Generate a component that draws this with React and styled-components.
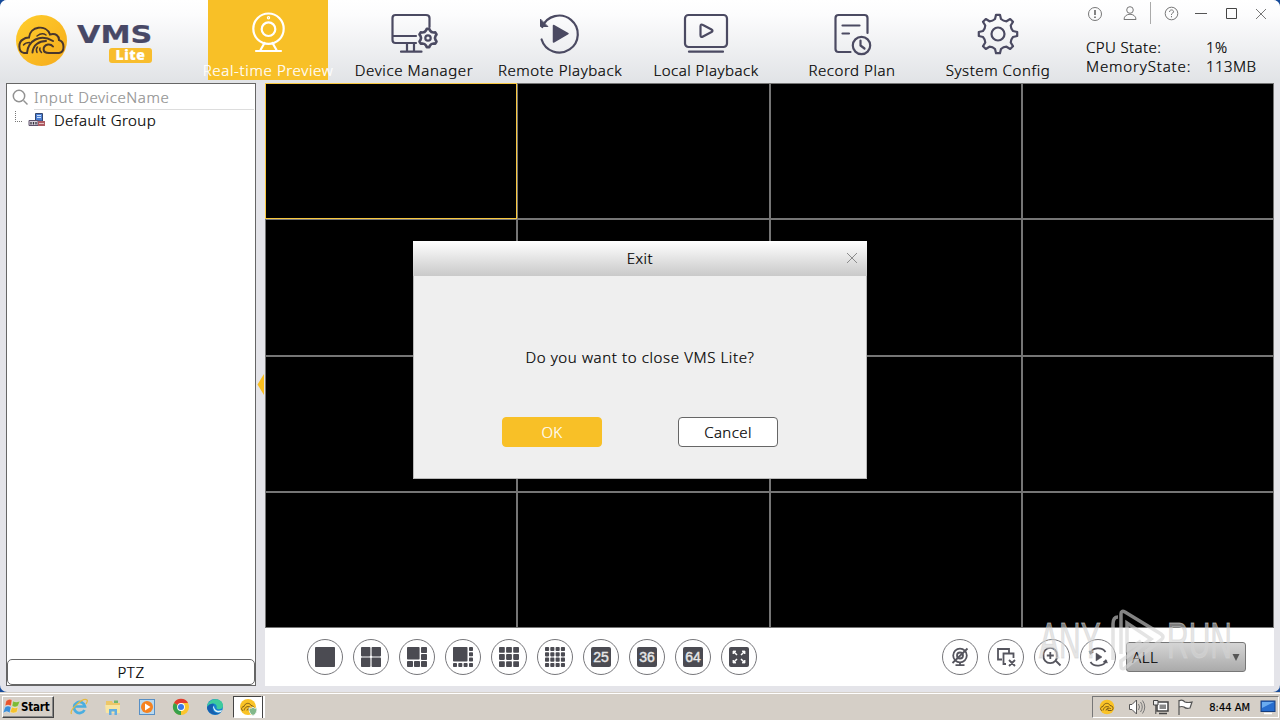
import React from "react";
import styled, { createGlobalStyle } from "styled-components";

const navItems = [
  { text: "Real-time Preview", icon: "camera", active: true, track: 0.64 },
  { text: "Device Manager", icon: "device", track: 0.62 },
  { text: "Remote Playback", icon: "remote", track: 0.56 },
  { text: "Local Playback", icon: "local", track: 0.5 },
  { text: "Record Plan", icon: "record", track: 0.56 },
  { text: "System Config", icon: "config", track: 0.56 },
];

// [x, y, size] blocks on a 20px square
const square = (n, size, gap) => {
  const list = [];
  for (let y = 0; y < n; y++)
    for (let x = 0; x < n; x++)
      list.push([x * (size + gap), y * (size + gap), size]);
  return list;
};
const layouts = [
  [[0, 0, 20]],
  square(2, 9.4, 1.2),
  [[0, 0, 12.6], [14, 0, 6], [14, 7, 6], [14, 14, 6], [0, 14, 6], [7, 14, 6]],
  [[0, 0, 14.5], [16, 0, 4], [16, 5.3, 4], [16, 10.6, 4], [16, 16, 4], [0, 16, 4], [5.3, 16, 4], [10.6, 16, 4]],
  square(3, 5.8, 1.3),
  square(4, 4.1, 1.2),
];

const gearPath = (teeth, cx, cy, inner, outer) => {
  const step = (Math.PI * 2) / teeth;
  const at = (r, a) =>
    `${(cx + r * Math.sin(a)).toFixed(2)} ${(cy - r * Math.cos(a)).toFixed(2)}`;
  let d = "";
  for (let i = 0; i < teeth; i++) {
    const a = i * step;
    d += `${i ? "L" : "M"}${at(outer, a - step * 0.13)} L${at(outer, a + step * 0.13)} `;
    d += `L${at(inner + 0.8, a + step * 0.25)} Q${at(inner - 0.6, a + step * 0.5)} ${at(inner + 0.8, a + step * 0.75)} `;
  }
  return d + "Z";
};

const NavIcon = ({ name }) => (
  <NavSvg viewBox="0 0 48 44" $active={name === "camera"}>
    {name === "camera" && (
      <>
        <circle cx="24.5" cy="18.7" r="15.2" />
        <circle cx="24.5" cy="19.2" r="6.8" />
        <circle cx="24.5" cy="7.700" r="0.6" />
        <path d="M20.500 33l-4 7M28.500 33l4 7M12 41H37" />
      </>
    )}
    {name === "device" && (
      <>
        <path d="M26 33H5.500Q2.500 33 2.500 30V8Q2.500 5 5.500 5H36Q39.500 5 39.500 8V17M3 26H26M17 33V41M24 33V41M11 41.700H31.500" />
        <path d={gearPath(6, 38, 28, 7, 9.2)} strokeWidth="2.600" />
        <circle cx="38" cy="28" r="2.7" />
      </>
    )}
    {name === "remote" && (
      <>
        <path d="M6.200 17A18.500 18.500 0 1 1 5.600 29.500" />
        <path d="M4.500 9.500V16.500H11.500Z" fill="currentColor" strokeWidth="1" />
        <path d="M17.500 15.500V32L32 23.700Z" fill="currentColor" strokeWidth="1.500" />
      </>
    )}
    {name === "local" && (
      <>
        <rect x="3" y="5" width="42" height="32" rx="3.500" />
        <path d="M7 41.700H41" />
        <path d="M18.500 16.500Q18.500 13.500 21 15L29.500 19.500Q31.500 20.700 29.500 22L21 26.500Q18.500 28 18.500 25Z" />
      </>
    )}
    {name === "record" && (
      <>
        <path d="M22.500 42H10.500Q7.500 42 7.500 39V8Q7.500 5 10.500 5H36.500Q39.500 5 39.500 8V23M14.500 15.500H31.500M14.500 23.500H21" />
        <circle cx="33.500" cy="35.500" r="8.700" />
        <path d="M32.500 30.500V35.500L36.500 38.500" />
      </>
    )}
    {name === "config" && (
      <>
        <path d={gearPath(8, 24, 24, 14.5, 19.3)} />
        <circle cx="24" cy="24" r="6.500" />
      </>
    )}
  </NavSvg>
);

const Logo = () => (
  <LogoWrap>
    <svg width="52" height="52" viewBox="0 0 52 52">
      <defs>
        <linearGradient id="sun" x1="0" y1="0" x2="1" y2="1">
          <stop offset="0" stopColor="#ffce2c" />
          <stop offset="1" stopColor="#f6ab1c" />
        </linearGradient>
      </defs>
      <circle cx="25.500" cy="26.500" r="25.500" fill="url(#sun)" />
      <g fill="none" stroke="#49362c" strokeWidth="2" strokeLinecap="round">
        <path d="M11 39H8C2 38 2 28 7 25.500Q9 23.500 13 23.500C14 12 30 10 34 20.500C40 19 43 22 43 26C49 28 49 38 43 39H33C26 39 26 32 32 30.500Q35 30 37 32.500" />
        <path d="M11 39C12 27 24 19 37 27M16.500 38.500C17 31 23 27 30 27" />
        <path d="M21 38.500Q19.500 35 21.500 33M25.500 38.500Q23 36 24 34M7.500 31Q9.500 28.500 13.500 28.500M21 22Q26 18 30 21" strokeWidth="1.500" />
      </g>
    </svg>
    <Brand>
      <BrandName>VMS</BrandName>
      <BrandTag>Lite</BrandTag>
    </Brand>
  </LogoWrap>
);

const ActionIcon = ({ name }) => (
  <svg width="24" height="24" viewBox="0 0 24 24" fill="none" stroke="#55555e" strokeWidth="1.8">
    {name === "mute" && (
      <>
        <circle cx="12" cy="10.500" r="6.800" />
        <circle cx="12" cy="10.500" r="3" />
        <path d="M12 17V20M7.500 20.200H16.500M4.500 18L19.500 3.500" />
      </>
    )}
    {name === "close" && (
      <path d="M8 14.500H4V4H15V8M12 19H9.500V8.500H19.500V13M15 15L21 21M21 15L15 21" />
    )}
    {name === "zoom" && (
      <path d="M17 10.500A6.800 6.800 0 1 1 3.500 10.500A6.800 6.800 0 1 1 17 10.500M15.500 15.500L20.500 20.500M10.300 7V14M6.800 10.500H13.800" />
    )}
    {name === "replay" && (
      <>
        <path d="M4 8.500C6 2.500 16 1.500 19.500 7M20.500 15.500C18 21.500 8 22.500 4.500 17" />
        <path d="M3 6L4.500 9.500L7.500 7ZM21.500 18L20 14.500L17 17ZM10 8V16L16 12Z" fill="#4f4f58" strokeWidth="0.500" />
      </>
    )}
  </svg>
);

const TaskIcon = ({ name }) => (
  <svg width="18" height="18" viewBox="0 0 18 18">
    {name === "windows" && (
      <g stroke="#fff" strokeWidth="0.300">
        <path d="M3 3Q6 0 9 2L8 8Q5 6 2 8Z" fill="#e9542b" />
        <path d="M10 3Q13 5 17 3L15 8Q12 10 9 8Z" fill="#7cba37" />
        <path d="M2 9Q5 7 8 9L7 15Q4 12 0 15Z" fill="#3b8ed8" />
        <path d="M9 9Q12 11 15 9L14 14Q10 16 7 14Z" fill="#f5c22c" />
      </g>
    )}
    {name === "ie" && (
      <>
        <path d="M14.500 12A5.500 5.500 0 1 1 15 8.500H5" fill="none" stroke="#4aaee0" strokeWidth="2.700" />
        <path d="M1.500 16C-1 12 13-1 17 2Q18 3 16 6" fill="none" stroke="#e5b93d" strokeWidth="1.200" />
      </>
    )}
    {name === "folder" && (
      <>
        <path d="M2 3H8L9 5H16V15H2Z" fill="#edc767" />
        <path d="M1 7H16V15H2Z" fill="#f8e5a1" />
        <path d="M5 17V11H13V17H10.500V13.500H7.500V17Z" fill="#62aee0" />
        <path d="M10 2.500H14V5H10Z" fill="#72b66c" />
      </>
    )}
    {name === "media" && (
      <>
        <rect x="1.500" y="1.500" width="15" height="15" fill="#b9d9ef" stroke="#578fc5" />
        <circle cx="9" cy="9" r="6" fill="#f58220" />
        <path d="M7 5.500V12.500L12.500 9Z" fill="#fff" />
      </>
    )}
    {name === "chrome" && (
      <>
        <circle cx="9" cy="9" r="8" fill="#fbc52d" />
        <path d="M9 9L2 5A8 8 0 0 1 16 5H9Z" fill="#e23b2f" />
        <path d="M9 9L9 17A8 8 0 0 1 2 5Z" fill="#38a14b" />
        <circle cx="9" cy="9" r="3.900" fill="#fff" />
        <circle cx="9" cy="9" r="3" fill="#3978e8" />
      </>
    )}
    {name === "edge" && (
      <>
        <circle cx="9" cy="9" r="8" fill="#1583d0" />
        <path d="M1 9C2-1 17-1 17 8C17 12 11 12 10.500 10C12 6 6 3 1 9Z" fill="#3ecb9d" />
        <path d="M7 8C5 14 11 17 15 14C11 19 1 16 1 9Q4 5 8 6Z" fill="#175fae" />
        <path d="M8 8C8 12 12 14 16 12L15 14Q8 16 7 9Z" fill="#dff2f8" />
      </>
    )}
    {(name === "vms" || name === "vmsTask") && (
      <>
        <circle cx="9" cy="9" r={name === "vms" ? 7.3 : 8} fill="#fac326" />
        <path d="M4 12.500C1.500 12 2.500 8.500 5 8.500C6 4.500 11 4.500 12 7.500C15.500 7.500 16 12 13.500 12.500H10C9 10 12 9.500 13 11M5 12.500C6 9 8 8 11 9M8 12.500Q8 11 10 10" fill="none" stroke="#7a5a18" strokeWidth="1" />
      </>
    )}
    {name === "vmsTask" && (
      <path d="M10 10Q13 11 14 9Q15 11 18 10Q18 16 14 17.500Q10 16 10 10Z" fill="#83b98a" stroke="#e8eee8" />
    )}
    {name === "sound" && (
      <>
        <path d="M1.500 6.500H4L8.500 2V16L4 11.500H1.500Z" fill="#fff" stroke="#555" />
        <path d="M10.500 6Q12.500 9 10.500 12M12.500 4Q16 9 12.500 14M14.500 2.500Q19 9 14.500 15.500" fill="none" stroke="#777" />
      </>
    )}
    {name === "network" && (
      <>
        <path d="M5 4H16V13H5ZM7 15.500H15" fill="#fff" stroke="#444" strokeWidth="1.500" />
        <path d="M7.500 6.500H14V11H7.500Z" fill="#888" />
        <path d="M1.500 2.500H6V7H1.500ZM3.800 7V16" fill="#eee" stroke="#444" />
      </>
    )}
    {name === "flag" && (
      <path d="M3 17V2M3 3Q6 1 9 4Q12 5 16 4L14 10Q10 11 8 9Q6 8 3 9" fill="#fff" stroke="#555" strokeWidth="1.200" />
    )}
    {name === "desktop" && (
      <>
        <rect x="2" y="3" width="14" height="10.500" fill="#276dce" stroke="#173d7c" />
        <path d="M3 4H15L3 10Z" fill="#6aabef" />
        <path d="M5 15.500H13" stroke="#fff" strokeWidth="1.500" />
      </>
    )}
  </svg>
);

const WindowButtons = () => (
  <WindowSvg viewBox="0 0 194 26">
    <circle cx="15" cy="14" r="6.500" />
    <path d="M15 10V15M15 16.500V18" strokeWidth="1.800" />
    <circle cx="50" cy="10" r="3.300" />
    <path d="M44 19.500C44 12.500 56 12.500 56 19.500Z" />
    <path d="M70.500 2V24" stroke="#aaa" />
    <circle cx="91.500" cy="13.500" r="6.300" />
    <path d="M89.500 12C89.500 9 94 9.500 93.500 12Q93 13 91.500 14V15M91.500 16V17.300" />
    <path d="M115 13.500H127" stroke="#555" />
    <path d="M146.500 8.500H156.500V18.500H146.500Z" stroke="#444" />
    <path d="M176 9L186 19M186 9L176 19" />
  </WindowSvg>
);

const App = () => (
  <Screen>
    <GlobalStyle />
    <Main>
      <Header>
        <Logo />
        <Nav>
          {navItems.map((item) => (
            <NavItem key={item.text} $active={item.active}>
              <NavIcon name={item.icon} />
              <NavLabel $track={item.track}>{item.text}</NavLabel>
            </NavItem>
          ))}
        </Nav>
        <Status>
          <WindowButtons />
          <StatusGrid>
            <span>CPU State:</span>
            <span>1%</span>
            <MemoryLabel>MemoryState:</MemoryLabel>
            <span>113MB</span>
          </StatusGrid>
        </Status>
      </Header>
      <Workspace>
        <Sidebar>
          <Search>
            <svg width="18" height="18" viewBox="0 0 18 18" fill="none" stroke="#929292" strokeWidth="1.500">
              <circle cx="7" cy="7" r="5.700" />
              <path d="M11.500 11.500L15.500 15.500" />
            </svg>
            <SearchText>Input DeviceName</SearchText>
          </Search>
          <TreeRow>
            <TreeLine />
            <svg width="18" height="16" viewBox="0 0 18 16">
              <path d="M7.500 1.500H14.500V9H7.500Z" fill="#4b7fd3" stroke="#34466d" />
              <path d="M9 3.500H13M9 5.500H13" stroke="#cde2ff" />
              <path d="M1 8.500H10V13.500H1Z" fill="#d9d2dd" stroke="#5d506b" />
              <path d="M3 10V12.500M5.500 10V12.500M8 10V12.500" stroke="#33333d" strokeWidth="1.300" />
              <path d="M10 9H17V14H10Z" fill="#ae5b63" />
              <path d="M11 11.500H16" stroke="#e6c0c0" />
            </svg>
            <TreeText>Default Group</TreeText>
          </TreeRow>
          <Ptz>PTZ</Ptz>
        </Sidebar>
        <Splitter>
          <svg width="7" height="22" viewBox="0 0 7 22">
            <path d="M7 0V21L0.500 10.500Z" fill="#fbbf1e" />
          </svg>
        </Splitter>
        <Stage>
          <VideoGrid>
            {Array.from({ length: 16 }, (_, i) => (
              <VideoCell key={i} $selected={i === 0} />
            ))}
          </VideoGrid>
          <Toolbar>
            <RoundGroup>
              {layouts.map((blocks, i) => (
                <RoundButton key={i}>
                  <svg width="20" height="20" viewBox="0 0 20 20" fill="#4b4b52">
                    {blocks.map(([x, y, s], j) => (
                      <rect key={j} x={x} y={y} width={s} height={s} rx="0.800" />
                    ))}
                  </svg>
                </RoundButton>
              ))}
              {[25, 36, 64].map((n) => (
                <RoundButton key={n}>
                  <NumberTile>{n}</NumberTile>
                </RoundButton>
              ))}
              <RoundButton>
                <NumberTile>
                  <svg width="20" height="20" viewBox="0 0 20 20" fill="#fff" stroke="#fff" strokeWidth="1.500">
                    <path d="M4 7V4H7ZM13 4H16V7ZM16 13V16H13ZM7 16H4V13Z" strokeWidth="0.800" />
                    <path d="M4.500 4.500L8 8M15.500 4.500L12 8M15.500 15.500L12 12M4.500 15.500L8 12" />
                  </svg>
                </NumberTile>
              </RoundButton>
            </RoundGroup>
            <RoundGroup>
              {["mute", "close", "zoom", "replay"].map((name) => (
                <RoundButton key={name}>
                  <ActionIcon name={name} />
                </RoundButton>
              ))}
            </RoundGroup>
            <Select>
              <span>ALL</span>
              <svg width="8" height="7" viewBox="0 0 8 7">
                <path d="M0.500 0H7.500L4 7Z" fill="#555" />
              </svg>
            </Select>
          </Toolbar>
        </Stage>
      </Workspace>
    </Main>
    <Taskbar>
      <Start>
        <TaskIcon name="windows" />
        Start
      </Start>
      <QuickLaunch>
        {["ie", "folder", "media", "chrome", "edge"].map((name) => (
          <TaskIcon key={name} name={name} />
        ))}
      </QuickLaunch>
      <ActiveTask>
        <TaskIcon name="vmsTask" />
      </ActiveTask>
      <Tray>
        <TaskIcon name="vms" />
        <TrayIcons>
          {["sound", "network", "flag"].map((name) => (
            <TaskIcon key={name} name={name} />
          ))}
        </TrayIcons>
        <Clock>8:44 AM</Clock>
        <TaskIcon name="desktop" />
      </Tray>
    </Taskbar>
    <Dialog>
      <DialogTitle>
        Exit
        <DialogClose viewBox="0 0 12 12">
          <path d="M1 1L11 11M11 1L1 11" />
        </DialogClose>
      </DialogTitle>
      <Message>Do you want to close VMS Lite?</Message>
      <DialogButtons>
        <DialogButton $primary>OK</DialogButton>
        <DialogButton>Cancel</DialogButton>
      </DialogButtons>
    </Dialog>
    <Watermark>
      <WatermarkText>ANY</WatermarkText>
      <svg width="62" height="66" viewBox="0 0 62 66" fill="none" stroke="currentColor" strokeWidth="3.500">
        <path d="M16 46V6Q16 2 20 4L56 26Q60 29 56 32L20 60Q16 62 16 58V53L46 31L22 15V42L36 33" />
        <path d="M8 52V16Q8 9 13 9" />
      </svg>
      <WatermarkText>RUN</WatermarkText>
    </Watermark>
  </Screen>
);

export default App;

const GlobalStyle = createGlobalStyle`
  body {
    margin: 0;
    overflow: hidden;
    font-family: "Noto Sans", "Open Sans", sans-serif;
    font-size: 15px;
    font-weight: 300;
    color: #000;
    -webkit-text-stroke: 0.2px;
  }
  * {
    box-sizing: border-box;
  }
  svg {
    display: block;
    flex: none;
  }
`;
const Screen = styled.div`
  position: relative;
  width: 1280px;
  height: 720px;
  overflow: hidden;
  display: flex;
  flex-direction: column;
  background: #164b9a;
`;
const Main = styled.div`
  height: 692px;
  display: flex;
  flex-direction: column;
  background: #e4e4e9;
  border-radius: 7px;
  overflow: hidden;
`;
const Header = styled.header`
  height: 83px;
  display: flex;
  background: linear-gradient(#fff 0, #fcfcfd 15px, #e2e4e7 80px);
`;
const LogoWrap = styled.div`
  width: 208px;
  padding: 14px 0 0 16px;
  display: flex;
  gap: 9px;
`;
const Brand = styled.div`
  display: flex;
  flex-direction: column;
  align-items: flex-start;
  padding-top: 11px;
`;
const BrandName = styled.div`
  height: 20px;
  font: 700 25px/20px "DejaVu Sans", sans-serif;
  color: #484866;
  transform: scaleX(1.21);
  transform-origin: left;
`;
const BrandTag = styled.div`
  width: 43px;
  height: 15px;
  margin: 3px 0 0 32px;
  border-radius: 3px;
  background: #f8bd2d;
  color: #fff;
  font: 900 14px/14px "Noto Sans", sans-serif;
  letter-spacing: 0.6px;
  text-align: center;
`;
const Nav = styled.nav`
  display: flex;
  gap: 26px;
`;
const NavItem = styled.div`
  width: 120px;
  height: 80px;
  padding-top: 10px;
  display: flex;
  flex-direction: column;
  align-items: center;
  background: ${({ $active }) => ($active ? "#f8c027" : "transparent")};
  color: ${({ $active }) => ($active ? "#fff" : "#000")};
`;
const NavSvg = styled.svg`
  width: 48px;
  height: 44px;
  overflow: visible;
  color: ${({ $active }) => ($active ? "#fff" : "#4b4a62")};
  fill: none;
  stroke: currentColor;
  stroke-width: 2.2;
  stroke-linecap: round;
  stroke-linejoin: round;
`;
const NavLabel = styled.div`
  margin-top: 6px;
  line-height: 20px;
  white-space: nowrap;
  letter-spacing: ${({ $track }) => $track}px;
`;
const Status = styled.div`
  margin-left: auto;
  width: 200px;
`;
const WindowSvg = styled.svg`
  width: 194px;
  height: 26px;
  fill: none;
  stroke: #777;
  stroke-width: 1;
`;
const StatusGrid = styled.div`
  display: grid;
  grid-template-columns: 120px 1fr;
  padding: 12px 0 0 6px;
  line-height: 19px;
  letter-spacing: 0.4px;
`;
const MemoryLabel = styled.span`
  letter-spacing: 0.85px;
`;
const Workspace = styled.div`
  display: flex;
  height: 603px;
  padding: 0 6px;
`;
const Sidebar = styled.aside`
  width: 250px;
  display: flex;
  flex-direction: column;
  background: #fff;
  border: 1px solid #666;
`;
const Search = styled.div`
  height: 26px;
  display: flex;
  align-items: center;
  gap: 4px;
  padding: 2px 1px 0 5px;
`;
const SearchText = styled.div`
  flex: 1;
  height: 24px;
  line-height: 23px;
  color: #929292;
  border-bottom: 1px solid #ddd;
  letter-spacing: 0.6px;
`;
const TreeRow = styled.div`
  display: flex;
  align-items: center;
  height: 20px;
  padding-left: 8px;
`;
const TreeLine = styled.div`
  width: 7px;
  height: 11px;
  margin: -8px 6px 0 0;
  border-left: 1px dotted #777;
  border-bottom: 1px dotted #777;
`;
const TreeText = styled.span`
  margin-left: 8px;
  line-height: 20px;
  letter-spacing: 0.45px;
`;
const Ptz = styled.div`
  height: 26px;
  margin-top: auto;
  border: 1px solid #666;
  border-radius: 5px;
  text-align: center;
  line-height: 25px;
  letter-spacing: 0.6px;
`;
const Splitter = styled.div`
  width: 9px;
  display: flex;
  align-items: center;
  justify-content: flex-end;
  padding-right: 1px;
`;
const Stage = styled.div`
  width: 1009px;
  background: #fff;
`;
const VideoGrid = styled.div`
  height: 545px;
  display: grid;
  grid-template: repeat(4, 1fr) / repeat(4, 1fr);
  background: #000;
`;
const VideoCell = styled.div`
  border: 1px solid ${({ $selected }) => ($selected ? "#f8c840" : "#757575")};
`;
const Toolbar = styled.div`
  height: 58px;
  display: flex;
  align-items: center;
  padding: 0 28px 0 42px;
`;
const RoundGroup = styled.div`
  display: flex;
  gap: 10px;
  & + & {
    margin-left: auto;
  }
`;
const RoundButton = styled.div`
  width: 36px;
  height: 36px;
  border: 1px solid #77777b;
  border-radius: 50%;
  display: flex;
  align-items: center;
  justify-content: center;
`;
const NumberTile = styled.div`
  width: 20px;
  height: 20px;
  border-radius: 2px;
  background: #4b4b52;
  color: #e8e8e8;
  font: 400 14px/21px "Liberation Sans", Arial, sans-serif;
  -webkit-text-stroke: 0.4px;
  text-align: center;
`;
const Select = styled.div`
  width: 120px;
  height: 30px;
  margin-left: 10px;
  padding: 0 5px 0 5px;
  display: flex;
  align-items: center;
  justify-content: space-between;
  letter-spacing: 0.6px;
  border: 1px solid #777;
  border-radius: 3px;
  background: linear-gradient(#d5d5d5, #aaa);
`;
const Taskbar = styled.footer`
  height: 28px;
  display: flex;
  align-items: center;
  background: #d5cfc7;
  border-top: 1px solid #d5cfc7;
  box-shadow: inset 0 1px #fff;
  padding: 1px 1px 0 2px;
`;
const Start = styled.div`
  width: 52px;
  height: 22px;
  display: flex;
  align-items: center;
  font: 700 11.500px "DejaVu Sans Condensed", sans-serif;
  -webkit-text-stroke: 0;
  letter-spacing: -0.2px;
  border: 1px solid;
  border-color: #fff #444 #444 #fff;
  box-shadow: inset -1px -1px #888;
`;
const QuickLaunch = styled.div`
  display: flex;
  gap: 16px;
  margin-left: 16px;
`;
const ActiveTask = styled.div`
  width: 29px;
  height: 22px;
  margin-left: 9px;
  display: flex;
  align-items: center;
  justify-content: center;
  background: #fff;
  border: 1px solid;
  border-color: #444 #fff #fff #444;
  box-shadow: 1px 0 #444, 3px 0 #fff;
`;
const Tray = styled.div`
  width: 187px;
  height: 22px;
  margin-left: auto;
  display: flex;
  align-items: center;
  padding: 0 1px 0 5px;
  border: 1px solid;
  border-color: #777 #fff #fff #777;
`;
const TrayIcons = styled.div`
  display: flex;
  gap: 6px;
  margin-left: 12px;
`;
const Clock = styled.span`
  flex: 1;
  white-space: nowrap;
  text-align: right;
  margin-right: 9px;
  font: 11px "DejaVu Sans Condensed", sans-serif;
`;
const Dialog = styled.div`
  position: absolute;
  left: 413px;
  top: 241px;
  width: 454px;
  height: 238px;
  background: #efefef;
  border: 1px solid #b9b9b9;
  border-top: 0;
`;
const DialogTitle = styled.div`
  height: 35px;
  margin: 0 -1px;
  position: relative;
  text-align: center;
  line-height: 35px;
  letter-spacing: 0.5px;
  background: linear-gradient(#fff, #c9c9c9);
`;
const DialogClose = styled.svg`
  position: absolute;
  right: 9px;
  top: 11px;
  width: 12px;
  height: 12px;
  stroke: #8b8b8b;
  fill: none;
`;
const Message = styled.div`
  margin-top: 70px;
  text-align: center;
  line-height: 22px;
  letter-spacing: 0.62px;
`;
const DialogButtons = styled.div`
  display: flex;
  justify-content: center;
  gap: 76px;
  margin-top: 49px;
`;
const DialogButton = styled.div`
  width: 100px;
  height: 30px;
  border-radius: 4px;
  text-align: center;
  line-height: 29px;
  letter-spacing: 0.4px;
  border: 1px solid ${({ $primary }) => ($primary ? "#f8c027" : "#666")};
  background: ${({ $primary }) => ($primary ? "#f8c027" : "#fff")};
  color: ${({ $primary }) => ($primary ? "#fff" : "#000")};
`;
const Watermark = styled.div`
  position: absolute;
  left: 1039px;
  top: 608px;
  display: flex;
  color: rgba(212, 212, 212, 0.62);
  pointer-events: none;
`;
const WatermarkText = styled.span`
  width: 66px;
  font: 50px/66px "Liberation Sans", Arial, sans-serif;
  transform: scaleX(0.6);
  transform-origin: left;
  -webkit-text-stroke: 1px;
`;
